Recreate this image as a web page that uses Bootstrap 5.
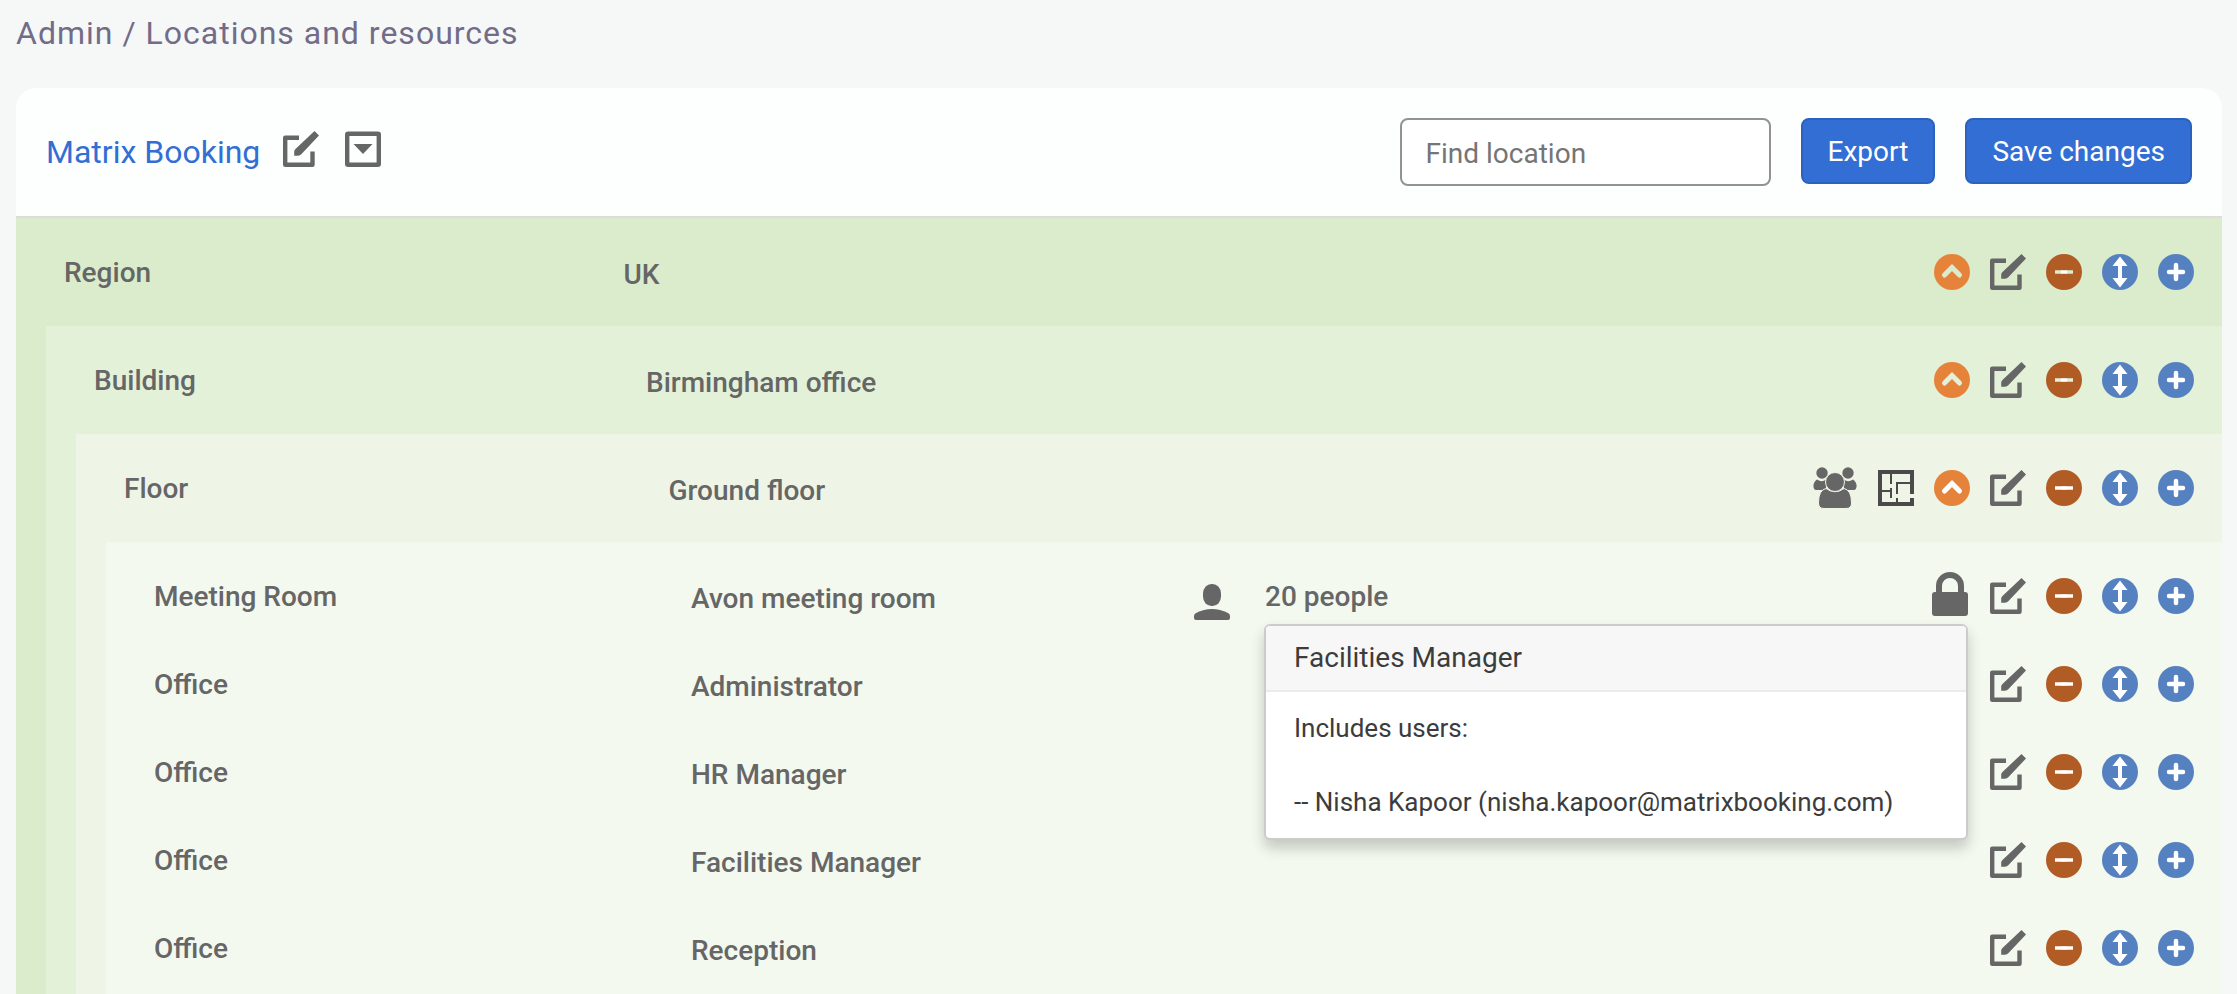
<!DOCTYPE html>
<html lang="en">
<head>
<meta charset="utf-8">
<meta name="viewport" content="width=device-width, initial-scale=1">
<title>Locations and resources</title>
<link href="https://cdn.jsdelivr.net/npm/bootstrap@5.3.0/dist/css/bootstrap.min.css" rel="stylesheet">
<style>
  body { background: #f6f8f8; color: #666; font-family: Roboto, sans-serif; font-size: 28px; line-height: 40px; overflow-x: hidden; }
  .page { padding: 12px 15px 0 16px; }
  .crumbs { font-size: 32px; font-weight: 400; line-height: 42px; letter-spacing: 1px; color: #726c88; margin-bottom: 34px; }
  .crumbs a { color: inherit; }
  .panel { background: #fdfffe; border-radius: 20px 20px 0 0; }
  .panel-top { padding: 30px; border-bottom: 2px solid #dcdcdc; }
  .site-link { font-size: 32px; color: #326ed3; margin-right: 23px; padding-top: 6px; }
  .site-tools { gap: 26px; }
  .top-actions { gap: 30px; }
  .find-box { width: 371px; height: 68px; font-size: 28px; padding: 2px 24px 0; border: 2px solid #929292; border-radius: 8px; color: #555; }
  .find-box::placeholder { color: #757575; }
  .btn-site { --bs-btn-bg: #326ed3; --bs-btn-border-color: #2b62be; --bs-btn-color: #fff; --bs-btn-hover-bg: #2b62be; --bs-btn-hover-color: #fff; height: 66px; font-size: 28px; padding: 2px 25px 0; border-width: 2px; border-radius: 8px; line-height: 40px; }
  .level { padding-top: 10px; }
  .level .level { margin: 10px 0 0 30px; }
  .l-region { background: #dbeccc; }
  .l-building { background: #e4f1d9; }
  .l-floor { background: #eff5e6; }
  .l-room { background: #f3f9ef; padding-bottom: 10px; }
  .item-row { height: 88px; --bs-gutter-x: 0; font-weight: 500; }
  .cell-kind { padding: 2px 0 0 48px; }
  .cell-name { padding: 5px 0 0 56px; }
  .cell-size { padding-left: 30px; gap: 35px; }
  .cell-size svg { margin-top: 12px; }
  .cell-size span { padding-top: 2px; }
  .cell-tools { gap: 20px; padding-right: 28px; }
  .icon-btn { display: block; padding: 0; border: 0; background: none; color: #666; line-height: 0; }
  .icon-btn svg, .cell-size svg { display: block; }
  .ico { width: 36px; height: 36px; }
  .ico-people { width: 44px; height: 42px; margin-right: 1px; }
  .ico-lock { width: 36px; height: 44px; margin: 0 2px 4px 0; }
  .tip-box { position: absolute; z-index: 5; top: 72px; right: 254px; width: 704px; max-width: none; font-weight: 400; line-height: 37px; background: #fff; border: 2px solid #ccc; border-radius: 6px; box-shadow: 0 8px 14px rgba(0,0,0,.2); font-family: Roboto, sans-serif; }
  .tip-box .popover-header { font-size: 28px; font-weight: 400; line-height: 36px; padding: 14px 28px; background: #f7f7f7; border-bottom: 2px solid #ebebeb; color: #3c3c3c; border-radius: 4px 4px 0 0; }
  .tip-box .popover-body { padding: 18px 28px 17px; font-size: 26px; color: #3c3c3c; }
  .tip-box p { margin-bottom: 37px; }
  .tip-box p:last-child { margin-bottom: 0; }
</style>
</head>
<body>
<svg class="d-none" aria-hidden="true">
  <symbol id="edit" viewBox="0 0 36 36"><path d="M16 6.700H2.200V33.800H29.500V20.500" fill="none" stroke="currentColor" stroke-width="4.400" stroke-linejoin="round"/><path d="M31.500 0 36 4.500 18.500 23Q17 24.800 15 24.800H11.200V20.500Q11.200 19 13 17.500Z" fill="currentColor"/></symbol>
  <symbol id="menu" viewBox="0 0 36 36"><rect x="2.200" y="2.700" width="31.600" height="31" rx="1" fill="none" stroke="currentColor" stroke-width="4.400"/><path d="M8.500 13H27.500L18 23Z" fill="currentColor"/></symbol>
  <symbol id="up" viewBox="0 0 36 36"><circle cx="18" cy="18" r="18" fill="#e6833b"/><path d="M10.500 21 18 13.500 25.500 21" fill="none" stroke="var(--cut)" stroke-width="5" stroke-linecap="round"/></symbol>
  <symbol id="minus" viewBox="0 0 36 36"><circle cx="18" cy="18" r="18" fill="#b15c25"/><path d="M9 18H27" stroke="var(--cut)" stroke-width="3.500"/><path d="M15 18H21" stroke="#fff" stroke-width="3"/></symbol>
  <symbol id="move" viewBox="0 0 36 36"><circle cx="18" cy="18" r="18" fill="#5681c0"/><path d="M18 9V27" stroke="#fff" stroke-width="4"/><path d="M18 2.500 25.500 12H10.500ZM18 33.500 25.500 24H10.500Z" fill="#fff"/></symbol>
  <symbol id="plus" viewBox="0 0 36 36"><circle cx="18" cy="18" r="18" fill="#5681c0"/><path d="M18 11V25M11 18H25" stroke="#fff" stroke-width="4.500" stroke-linecap="round"/></symbol>
  <symbol id="plan" viewBox="0 0 36 36"><g fill="none" stroke="#4a4a4a"><path d="M34 24V2H2V34H34V28" stroke-width="4"/><path d="M13 4V14M13 18V28M4 21H13M19 24V13H32M19 28V33" stroke-width="2"/></g></symbol>
  <symbol id="people" viewBox="0 0 44 42"><g fill="currentColor"><circle cx="9" cy="6" r="5.700"/><circle cx="35" cy="6" r="5.700"/><path d="M4 12.500Q9 16 13 12.500V23H3Q1 23 .5 20 0 15 4 12.500ZM40 12.500Q35 16 31 12.500V23H41Q43 23 43.500 20 44 15 40 12.500Z"/></g><g fill="currentColor" stroke="#eff5e6"><path d="M13 21.500Q22 28 31 21.500 38.500 23 38.500 36 38.500 41.500 33 41.500H11Q5.500 41.500 5.500 36 5.500 23 13 21.500Z"/><circle cx="22" cy="15" r="9.500"/></g></symbol>
  <symbol id="lock" viewBox="0 0 36 44"><path d="M7 22V14A11 11 0 0 1 29 14V22" fill="none" stroke="currentColor" stroke-width="6"/><rect y="20" width="36" height="24" rx="3" fill="currentColor"/></symbol>
  <symbol id="person" viewBox="0 0 36 36"><rect x="9" width="18" height="22" rx="8.500" ry="9.500" fill="currentColor"/><path d="M0 34V32Q0 30 2 29 10 25 18 25T34 29Q36 30 36 32V34Q36 36 34 36H2Q0 36 0 34Z" fill="currentColor"/></symbol>
</svg>

<div class="page">
  <h1 class="crumbs"><a href="#" class="text-decoration-none">Admin</a> / Locations and resources</h1>
  <main class="panel">
    <header class="panel-top d-flex justify-content-between align-items-start">
      <div class="site-tools d-flex align-items-center mt-2">
        <div class="d-flex align-items-center">
          <a href="#" class="site-link text-decoration-none">Matrix Booking</a>
          <button class="icon-btn" aria-label="Edit organisation"><svg class="ico"><use href="#edit"/></svg></button>
        </div>
        <button class="icon-btn" aria-label="Organisation menu"><svg class="ico"><use href="#menu"/></svg></button>
      </div>
      <form class="top-actions d-flex">
        <input type="text" class="form-control find-box" placeholder="Find location" aria-label="Find location">
        <button type="button" class="btn btn-site">Export</button>
        <button type="button" class="btn btn-site text-nowrap">Save changes</button>
      </form>
    </header>
    <div id="tree"></div>
  </main>
</div>

<script src="https://cdn.jsdelivr.net/npm/bootstrap@5.3.0/dist/js/bootstrap.bundle.min.js"></script>
<script>
  const labels = { people: 'Show people', plan: 'Floor plan', up: 'Collapse', lock: 'Restrictions', edit: 'Edit', minus: 'Remove', move: 'Move', plus: 'Add' };
  const always = ['edit', 'minus', 'move', 'plus'];
  const tree = [{ kind: 'Region', name: 'UK', tools: ['up'], level: 'region', items: [
    { kind: 'Building', name: 'Birmingham office', tools: ['up'], level: 'building', items: [
      { kind: 'Floor', name: 'Ground floor', tools: ['people', 'plan', 'up'], level: 'floor', items: [
        { kind: 'Meeting Room', name: 'Avon meeting room', size: '20 people', tools: ['lock'], level: 'room',
          tip: { title: 'Facilities Manager', lines: ['Includes users:', '-- Nisha Kapoor (nisha.kapoor@matrixbooking.com)'] } },
        { kind: 'Office', name: 'Administrator' },
        { kind: 'Office', name: 'HR Manager' },
        { kind: 'Office', name: 'Facilities Manager' },
        { kind: 'Office', name: 'Reception' }
      ] }
    ] }
  ] }];
  const cut = { region: '#dbeccc', building: '#e4f1d9', floor: '#fff', room: '#fff' };
  const icon = n => `<svg class="ico ico-${n}"><use href="#${n}"/></svg>`;
  const tip = t => `<div class="popover tip-box" role="tooltip"><h2 class="popover-header">${t.title}</h2><div class="popover-body">${t.lines.map(l => `<p>${l}</p>`).join('')}</div></div>`;
  const row = n => `<div class="item-row row align-items-center position-relative">
    <div class="col-3 cell-kind">${n.kind}</div>
    <div class="col-3 cell-name">${n.name}</div>
    <div class="col-3 cell-size d-flex align-items-center">${n.size ? icon('person') + `<span>${n.size}</span>` : ''}</div>
    <div class="col-3 cell-tools d-flex justify-content-end align-items-center">${(n.tools || []).concat(always).map(t => `<button class="icon-btn" aria-label="${labels[t]} ${n.name}">${icon(t)}</button>`).join('')}</div>
    ${n.tip ? tip(n.tip) : ''}</div>`;
  const draw = items => `<section class="level l-${items[0].level}" style="--cut:${cut[items[0].level]}">${items.map(n => row(n) + (n.items ? draw(n.items) : '')).join('')}</section>`;
  document.getElementById('tree').innerHTML = draw(tree);
</script>
</body>
</html>
